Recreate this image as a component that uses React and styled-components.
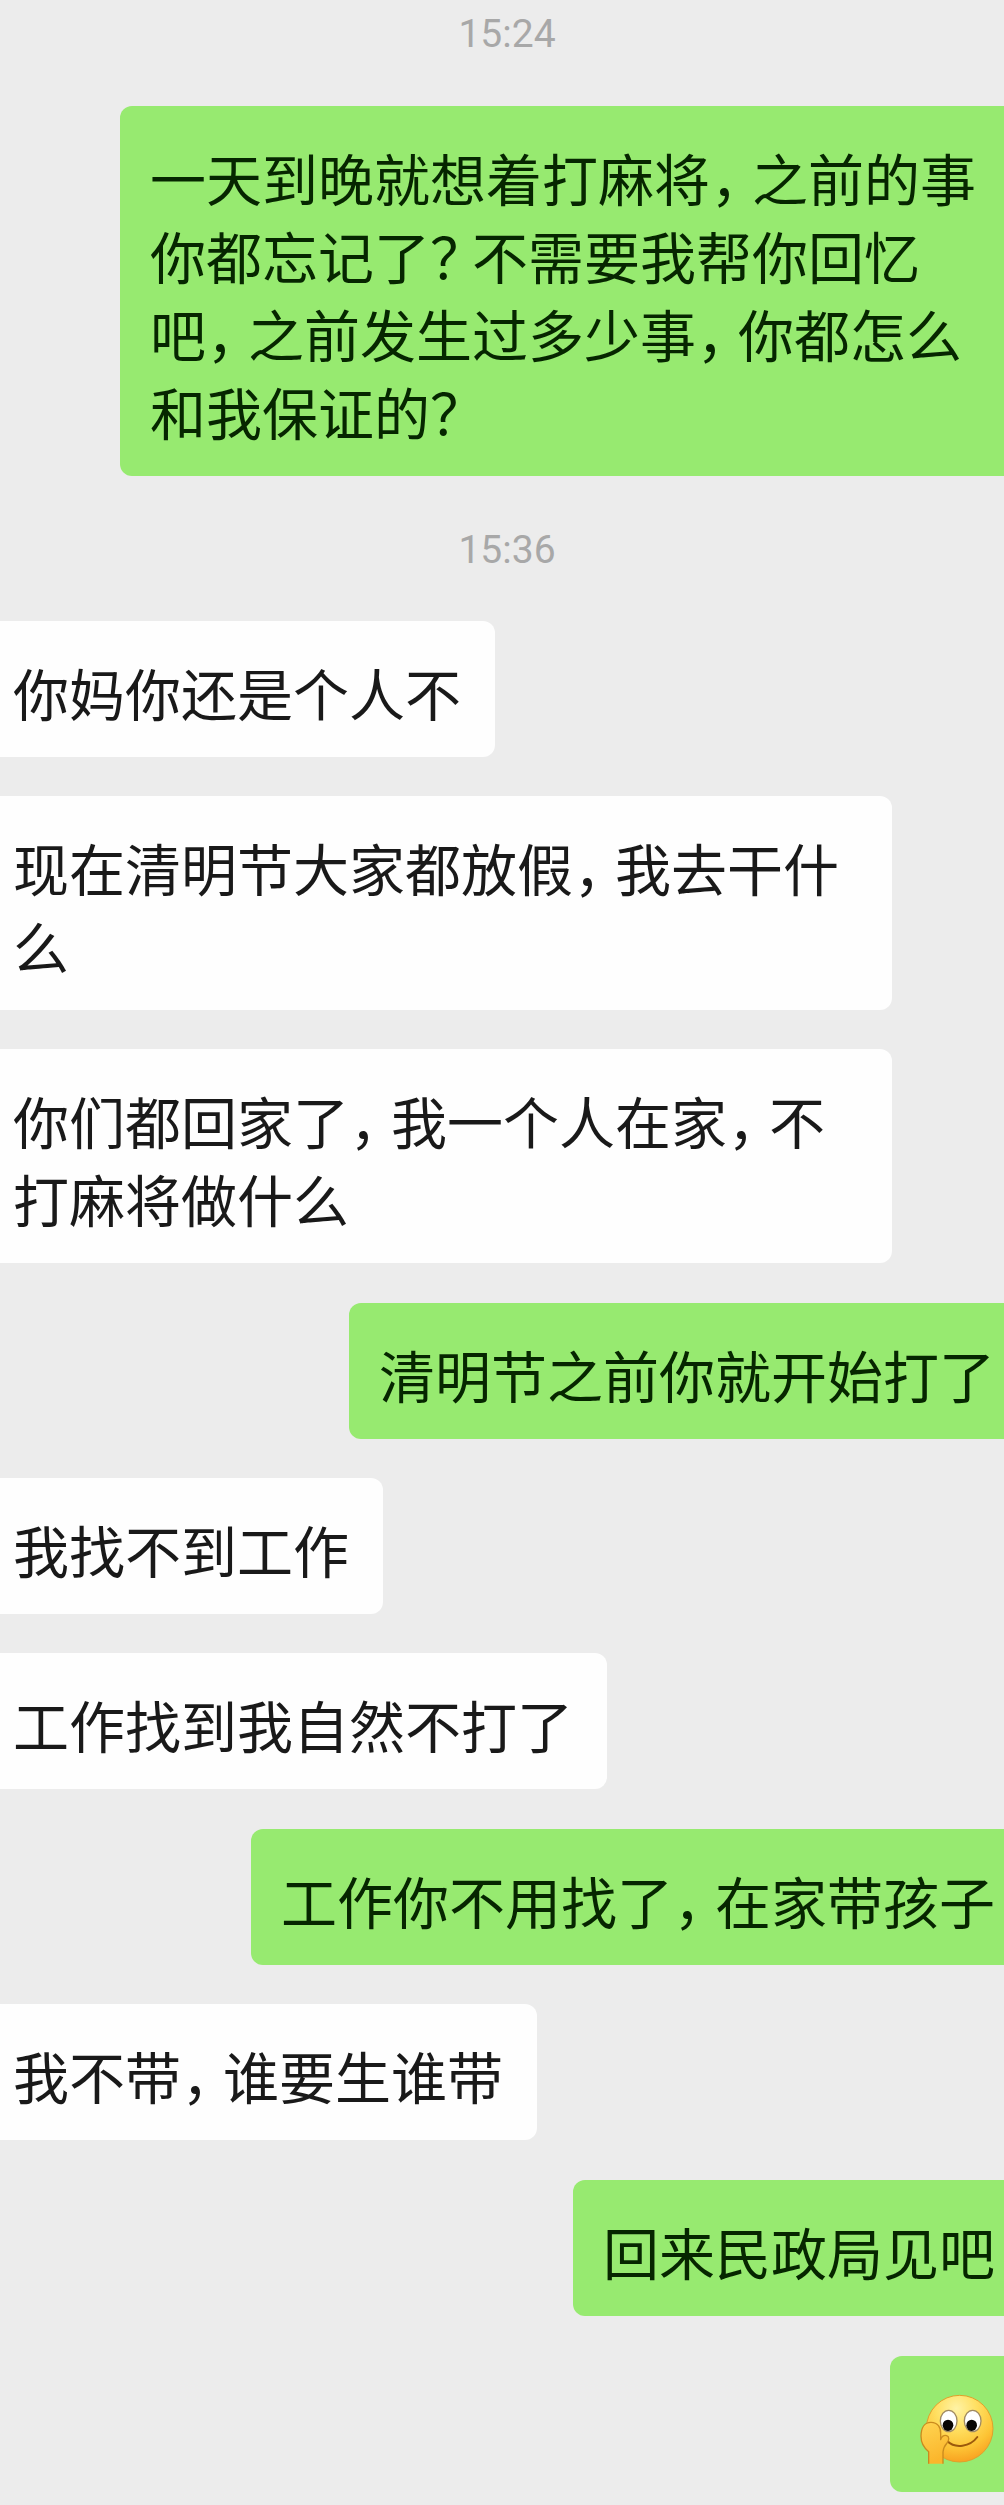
import React from "react";
import styled, { createGlobalStyle } from "styled-components";

const messages = [
  { type: "time", text: "15:24" },
  {
    type: "mine",
    text: "一天到晚就想着打麻将，之前的事你都忘记了？不需要我帮你回忆吧，之前发生过多少事，你都怎么和我保证的？",
  },
  { type: "time", text: "15:36" },
  { type: "theirs", text: "你妈你还是个人不" },
  { type: "theirs", text: "现在清明节大家都放假，我去干什么" },
  { type: "theirs", text: "你们都回家了，我一个人在家，不打麻将做什么" },
  { type: "mine", text: "清明节之前你就开始打了" },
  { type: "theirs", text: "我找不到工作" },
  { type: "theirs", text: "工作找到我自然不打了" },
  { type: "mine", text: "工作你不用找了，在家带孩子" },
  { type: "theirs", text: "我不带，谁要生谁带" },
  { type: "mine", text: "回来民政局见吧" },
  { type: "mine", emoji: true },
];

const FacepalmEmoji = () => (
  <EmojiIcon viewBox="180 144 225 234" role="img" aria-label="捂脸">
    <defs>
      <radialGradient id="face" cx="0.45" cy="0.2" r="0.85">
        <stop offset="0" stopColor="#fff3a6" />
        <stop offset="0.35" stopColor="#ffe063" />
        <stop offset="0.7" stopColor="#fdc435" />
        <stop offset="1" stopColor="#f79a1c" />
      </radialGradient>
      <linearGradient id="hand" x1="0" y1="0" x2="0.3" y2="1">
        <stop offset="0" stopColor="#ffd552" />
        <stop offset="1" stopColor="#fbb62c" />
      </linearGradient>
    </defs>
    <circle cx="299" cy="266" r="100" fill="url(#face)" stroke="#e0a02c" strokeWidth="3" />
    <ellipse cx="266" cy="243" rx="25" ry="32" fill="#fff" stroke="#a08a62" strokeWidth="4" />
    <ellipse cx="338" cy="243" rx="25" ry="32" fill="#fff" stroke="#a08a62" strokeWidth="4" />
    <ellipse cx="264" cy="256" rx="16" ry="17" fill="#080604" />
    <ellipse cx="335" cy="256" rx="16" ry="17" fill="#080604" />
    <path
      d="M262 304 C285 326 330 321 352 291"
      fill="none"
      stroke="#9c5a0c"
      strokeWidth="6"
      strokeLinecap="round"
    />
    <path
      d="M206 371 L206 335 C192 324 183 309 183 289 C183 263 194 247 213 247 C233 247 243 262 242 281 L242 299 C244 290 252 284 260 287 C269 290 267 301 261 309 C253 318 250 325 249 336 L249 371 Z"
      fill="url(#hand)"
    />
    <path
      d="M206 371 L206 335 C192 324 183 309 183 289 C183 263 194 247 213 247 C233 247 243 262 242 281 L242 299 C244 290 252 284 260 287 C269 290 267 301 261 309 C253 318 250 325 249 336 L249 371"
      fill="none"
      stroke="#c98a1e"
      strokeWidth="4"
      strokeLinejoin="round"
    />
  </EmojiIcon>
);

// full-width punctuation is set narrower than the characters round it
const renderText = (text) =>
  text.split(/([，？])/).map((part, i) => {
    if (part === "，") return <Comma key={i}>{part}</Comma>;
    if (part === "？") return <Mark key={i}>{part}</Mark>;
    return part;
  });

const App = () => {
  return (
    <>
      <GlobalStyle />
      <Chat>
        {messages.map((message, i) =>
          message.type === "time" ? (
            <Time key={i}>{message.text}</Time>
          ) : (
            <Row key={i} $mine={message.type === "mine"}>
              <Bubble $mine={message.type === "mine"}>
                {message.emoji ? (
                  <FacepalmEmoji />
                ) : (
                  <Text>{renderText(message.text)}</Text>
                )}
              </Bubble>
            </Row>
          )
        )}
      </Chat>
    </>
  );
};

const GlobalStyle = createGlobalStyle`
  * {
    box-sizing: border-box;
  }
  body {
    margin: 0;
    background-color: #ececec;
  }
`;

const Chat = styled.main`
  display: flex;
  flex-direction: column;
  padding: 8px 0 12px;
  overflow: hidden;
  background-color: #ececec;
  font-family: "Noto Sans CJK SC", sans-serif;
`;

const Time = styled.time`
  padding: 0 0 6px 10px;
  color: #a8a8a8;
  font-family: Roboto, sans-serif;
  font-size: 39px;
  line-height: 52px;
  text-align: center;

  &:not(:first-child) {
    margin-top: 48px;
  }
`;

const Row = styled.div`
  display: flex;
  justify-content: ${(props) => (props.$mine ? "flex-end" : "flex-start")};
  margin-top: ${(props) => (props.$mine ? "40px" : "39px")};
`;

const Bubble = styled.div`
  padding: ${(props) => (props.$mine ? "32px 9px 26px 30px" : "32px 34px 26px 13px")};
  border-radius: ${(props) => (props.$mine ? "12px 0 0 12px" : "0 12px 12px 0")};
  background-color: ${(props) => (props.$mine ? "#97ea70" : "#fefefe")};
  color: ${(props) => (props.$mine ? "#062600" : "#191919")};
`;

const Text = styled.p`
  max-width: 845px;
  margin: 0;
  font-size: 56px;
  line-height: 78px;
`;

const Mark = styled.span`
  margin-right: 14px;
  font-feature-settings: "palt";
`;

const Comma = styled(Mark)`
  margin: 0 10px 0 4px;
`;

const EmojiIcon = styled.svg`
  display: block;
  width: 75px;
  height: 78px;
`;

export default App;
